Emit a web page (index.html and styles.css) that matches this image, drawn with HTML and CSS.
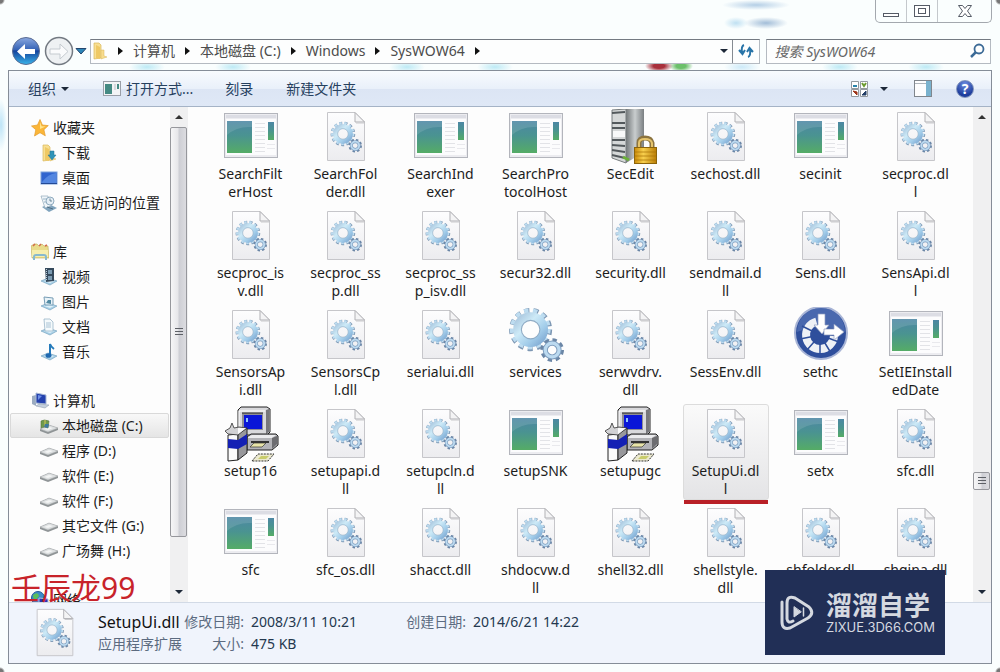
FILE: index.html
```html
<!DOCTYPE html>
<html lang="zh-CN">
<head>
  <meta charset="UTF-8">
  <meta name="viewport" content="width=device-width, initial-scale=1.0">
  <title>SysWOW64</title>
  <link rel="stylesheet" href="styles.css">
</head>
<body>
  <svg class="sprite" aria-hidden="true">
    <defs>
      <linearGradient id="g-paper" x1="0" y1="0" x2="0" y2="1"><stop offset="0" stop-color="#fdfdfe"/><stop offset="1" stop-color="#ececef"/></linearGradient>
      <linearGradient id="g-gear" x1="0" y1="0" x2="1" y2="1"><stop offset="0" stop-color="#a9c6de"/><stop offset=".35" stop-color="#cdeaf7"/><stop offset=".7" stop-color="#a3cdea"/><stop offset="1" stop-color="#7fa9d2"/></linearGradient>
      <linearGradient id="g-green" x1="0" y1="0" x2="0" y2="1"><stop offset="0" stop-color="#4d87a4"/><stop offset=".45" stop-color="#4a9391"/><stop offset="1" stop-color="#55ac66"/></linearGradient>
      <linearGradient id="g-server" x1="0" y1="0" x2="1" y2="0"><stop offset="0" stop-color="#73787a"/><stop offset=".5" stop-color="#c9cdce"/><stop offset="1" stop-color="#7a7f82"/></linearGradient>
      <linearGradient id="g-blue" x1="0" y1="0" x2="0" y2="1"><stop offset="0" stop-color="#8aa8e0"/><stop offset=".45" stop-color="#3563b6"/><stop offset=".5" stop-color="#15439c"/><stop offset="1" stop-color="#39b4ea"/></linearGradient>
      <linearGradient id="g-gold" x1="0" y1="0" x2="1" y2="0"><stop offset="0" stop-color="#c98a08"/><stop offset=".4" stop-color="#f8cf4d"/><stop offset="1" stop-color="#b97d06"/></linearGradient>
    </defs>

    <symbol id="gears" viewBox="0 0 26 26">
      <g fill="none">
        <circle cx="10.500" cy="10.500" r="8.700" stroke="#7d97b3" stroke-width="2.600" stroke-dasharray="2.300 1.905"/>
        <circle cx="10.300" cy="10.200" r="8.400" stroke="#bddcf0" stroke-width="2.200" stroke-dasharray="2 2.060"/>
        <circle cx="10.500" cy="10.500" r="6.200" stroke="url(#g-gear)" stroke-width="3.800"/>
        <circle cx="10.500" cy="10.500" r="4.300" stroke="#8fabc4" stroke-width=".500"/>
        <circle cx="20.500" cy="20" r="4.500" stroke="#6b86a6" stroke-width="2" stroke-dasharray="1.900 1.634"/>
        <circle cx="20.500" cy="20" r="3.200" stroke="#7d9cbd" stroke-width="2.400"/>
        <circle cx="20.500" cy="20" r="3.200" stroke="#bcdaf0" stroke-width="1.500"/>
      </g>
    </symbol>

    <symbol id="dll" viewBox="0 0 56 56">
      <path d="M9.500 3.500H37L46.500 13V51.500H9.500Z" fill="url(#g-paper)" stroke="#c6c6ca"/>
      <path d="M37 3.500V13H46.500Z" fill="#f4f4f5" stroke="#b1b1b5"/>
      <path d="M38 14H46" stroke="#c9c9cc"/>
      <use href="#gears" x="11" y="12" width="34" height="32"/>
    </symbol>

    <symbol id="exe" viewBox="0 0 56 56">
      <rect x="1.500" y="4.500" width="53" height="44" fill="#ececf0" stroke="#b3b5bc"/>
      <rect x="3" y="6" width="50" height="3" fill="#dcdde4"/>
      <rect x="3" y="10" width="50" height="36" fill="#fcfcfd"/>
      <rect x="4" y="12" width="25" height="32" fill="url(#g-green)"/>
      <path d="M4 26Q14 17 29 18V12H4Z" fill="#fff" opacity=".12"/>
      <path d="M32 14.500H42M32 18.500H42M32 22.500H42M32 26.500H42M32 30.500H42M32 34.500H42M32 38.500H42M32 42.500H42" stroke="#e2e3e7"/>
      <rect x="45" y="13" width="6" height="18" fill="url(#g-green)"/>
      <path d="M44 35.500H52M44 39.500H52" stroke="#e9e9ed"/>
    </symbol>

    <symbol id="services" viewBox="0 0 56 56"><use href="#gears" width="56" height="56"/></symbol>

    <symbol id="secedit" viewBox="0 0 56 56">
      <path d="M9 1L23 0V54L9 49Z" fill="#d5d8d8" stroke="#777c7e"/>
      <path d="M23 0H41V43L23 54Z" fill="url(#g-server)"/>
      <path d="M9 4L22 3M9 14H22M9 19H22M9 31H22M9 36L22 37M9 41L22 43M9 46L22 49" stroke="#53595c" stroke-width="2"/>
      <rect x="10" y="22" width="12" height="6" fill="#f8f9f9"/>
      <path d="M20 48l6 3" stroke="#6bb03a" stroke-width="3"/>
      <path d="M36 39V34Q36 29 42 29T49 34V39" fill="none" stroke="#8c7440" stroke-width="5"/>
      <path d="M36 39V34Q36 30 42 30T49 34V39" fill="none" stroke="#e5c46c" stroke-width="2"/>
      <rect x="31.500" y="38.500" width="22" height="16" fill="url(#g-gold)" stroke="#8c640a"/>
      <path d="M32 43H53M32 47H53M32 51H53" stroke="#a87207" opacity=".7"/>
    </symbol>

    <symbol id="sethc" viewBox="0 0 56 56">
      <circle cx="28" cy="26" r="26" fill="#2f4f9c" stroke="#a9b5d6" stroke-width="2"/>
      <path d="M4 25a24 24 0 0 1 48 0Q28 15 4 25Z" fill="#6b88c6" opacity=".45"/>
      <path d="M23.400 14.500A14 14 0 1 0 41 29" fill="none" stroke="#eef1f6" stroke-width="8"/>
      <path d="M27 28L38 46M27 28V47M27 28L14 43M27 28L7 32M27 28L9 19M27 28L46 35" stroke="#2f4f9c" stroke-width="1.500"/>
      <path d="M25 7H32V18H36L29 27L21 18H25Z" fill="#fff" stroke="#8c9bbf" stroke-width=".700"/>
      <path d="M31 22H41V17L51 25L41 33V28H31Z" fill="#fff" stroke="#8c9bbf" stroke-width=".700"/>
    </symbol>

    <symbol id="setup" viewBox="0 0 56 56">
      <path d="M15 4L18 1H44L47 3V26L44 29H17L15 27Z" fill="#d9d9dc" stroke="#222"/>
      <path d="M43 4L46 3V26L43 28Z" fill="#77777b"/>
      <path d="M16 27V5H42" fill="none" stroke="#fff"/>
      <path d="M19 7H40V24H19Z" fill="#8f8f93"/>
      <path d="M21 9H39V23H21Z" fill="#0a16d8"/>
      <path d="M19 7H40" stroke="#222"/>
      <path d="M23 12H25V16H23Z" fill="#8ec5ff"/>
      <path d="M24 31L28 28H53L55 30V39L49 44H24Z" fill="#b4b4b8" stroke="#222"/>
      <path d="M25 31L29 29H53L49 32H25Z" fill="#ececee"/>
      <path d="M49 32L54 30V38L49 43Z" fill="#6d6d71"/>
      <path d="M28 35H46V37H28Z" fill="#333"/>
      <path d="M27 41L31 37H43L39 41Z" fill="#e8e4a8" stroke="#333" stroke-width=".700"/>
      <path d="M5 29L15 28V54L5 55Z" fill="#fafafa" stroke="#222"/>
      <path d="M15 28L24 22V47L15 54Z" fill="#98989c" stroke="#222"/>
      <path d="M5 33L15 34L24 28V38L15 43L5 42Z" fill="#1420b4"/>
      <path d="M2 25L7 22L9 17L11 22L16 21L24 22L15 29L5 28Z" fill="#d2d2d4" stroke="#333" stroke-width=".800"/>
      <path d="M15 22L23 22L15 28Z" fill="#fafafa"/>
      <path d="M29 55L35 48H51L45 55Z" fill="#ecead0" stroke="#333" stroke-dasharray="2 1"/>
      <path d="M35 53L38 50H46L43 53Z" fill="#c8cc6c"/>
    </symbol>

    <symbol id="star" viewBox="0 0 18 18">
      <path d="M9 .500L11.400 6L17.300 6.600L12.900 10.700L14.300 16.800L9 13.700L3.500 17L4.800 10.700L.500 7L6.500 6Z" fill="#fbb638" stroke="#e39b2d" stroke-width=".700"/>
      <path d="M9 3L10.600 7.200L14.500 7.600L9 10Z" fill="#ffe48c"/>
    </symbol>
    <symbol id="folder" viewBox="0 0 18 18">
      <path d="M3 1H8L10 3V16L3 17Z" fill="#f8df92" stroke="#d9b75c" stroke-width=".700"/>
      <path d="M5 3L9 5V17L5 16Z" fill="#efc964"/>
      <path d="M10 8H13V14L16 15L10 17Z" fill="#f7dc8d" stroke="#d8b65c" stroke-width=".500"/>
    </symbol>
    <symbol id="download" viewBox="0 0 18 18">
      <use href="#folder"/>
      <path d="M10 7H14V11H16L12 16L8 11H10Z" fill="#2f94b8" stroke="#247390" stroke-width=".500"/>
    </symbol>
    <symbol id="desktop" viewBox="0 0 18 18">
      <rect x="1" y="3" width="16" height="12" fill="#3165cf" stroke="#7aa0d9"/>
      <path d="M2 13Q8 5 16 4V14H2Z" fill="#6496e8" opacity=".7"/>
      <path d="M1 14.500H17" stroke="#234a96"/>
    </symbol>
    <symbol id="recent" viewBox="0 0 18 18">
      <path d="M2 13L9 10L17 14L9 18Z" fill="#7fa3bd"/>
      <path d="M1 2H8L11 12L5 14Z" fill="#eff5f9" stroke="#94aaba" stroke-width=".700"/>
      <path d="M3 5H7M4 8H8" stroke="#9bb5c6"/>
      <circle cx="10" cy="7" r="4" fill="#e5eef5" stroke="#8fabbf"/>
      <path d="M10 4.500V7H12" stroke="#4f6e84" fill="none" stroke-width=".800"/>
      <path d="M7 13L13 15" stroke="#4f6e84"/>
    </symbol>
    <symbol id="library" viewBox="0 0 18 18">
      <path d="M0 3L3 1H6L8 3L11 1L13 3H17L18 15H1Z" fill="#e9dc8c" stroke="#c0af5d" stroke-width=".600"/>
      <path d="M2 3L4 1M8 3L10 1M14 3L16 2" stroke="#d46b4b" stroke-width="1.500"/>
      <path d="M1 7H17V14H1Z" fill="#f5eeae"/>
      <path d="M3 17V14Q3 12 5 12H13Q15 12 15 14V17" fill="none" stroke="#87b9ce" stroke-width="2"/>
    </symbol>
    <symbol id="tray" viewBox="0 0 18 18">
      <path d="M1 13L8 10L17 13L10 17Z" fill="#a9d0e6" stroke="#6d9cba" stroke-width=".600"/>
      <path d="M4 13L9 12L14 13L10 15Z" fill="#dff1fa"/>
    </symbol>
    <symbol id="video" viewBox="0 0 18 18">
      <use href="#tray"/>
      <path d="M5 0H14V13L6 14Z" fill="#35495c"/>
      <path d="M8 2H12V6H8ZM8 8H12V12H8Z" fill="#7c9bb2"/>
      <path d="M6.500 1V13" stroke="#bccdd8" stroke-dasharray="1 1"/>
    </symbol>
    <symbol id="picture" viewBox="0 0 18 18">
      <use href="#tray"/>
      <path d="M4 4L13 5V12L5 12Z" fill="#e9f3f8" stroke="#779db6"/>
      <path d="M6 10L8 7H11V11Z" fill="#528aa3"/>
    </symbol>
    <symbol id="document" viewBox="0 0 18 18">
      <use href="#tray"/>
      <path d="M4 1H10L13 4V13H5Z" fill="#f5fafc" stroke="#8eacc1" stroke-width=".700"/>
      <path d="M6 5H11M6 7H11M6 9H11" stroke="#a9c2d4"/>
    </symbol>
    <symbol id="music" viewBox="0 0 18 18">
      <use href="#tray"/>
      <path d="M10 12V1Q11 4 14 6" fill="none" stroke="#267bbb" stroke-width="2"/>
      <ellipse cx="8.500" cy="12.500" rx="3" ry="2.300" fill="#2069b0"/>
    </symbol>
    <symbol id="computer" viewBox="0 0 18 18">
      <path d="M1 4L5 3V14L1 12Z" fill="#9babc0"/>
      <path d="M5 1L15 3V12L5 11Z" fill="#2441ad" stroke="#a9bad6"/>
      <path d="M7 3L11 4L7 8Z" fill="#6d8fe8"/>
      <path d="M8 12L18 13L14 16L5 14Z" fill="#c5d0dd" stroke="#8795a6" stroke-width=".500"/>
    </symbol>
    <symbol id="drive" viewBox="0 0 18 18">
      <path d="M0 10L9 6L18 9V11L8 15L0 12Z" fill="#8f9496"/>
      <path d="M0 10L9 6L18 9L8 13Z" fill="#dcdfe0" stroke="#a3a7a9" stroke-width=".500"/>
      <path d="M4 10L9 8L13 9L8 11Z" fill="#f4f5f5"/>
    </symbol>
    <symbol id="system-drive" viewBox="0 0 18 18">
      <use href="#drive" y="2"/>
      <path d="M1 4Q4 2 9 4L8 11Q4 9 1 11Z" fill="#6f9a4c" stroke="#55733e" stroke-width=".600"/>
      <path d="M5 3V10" stroke="#d9c95c"/>
      <path d="M5 7L9 7L8 11L4 10Z" fill="#3f79a0"/>
    </symbol>
    <symbol id="network" viewBox="0 0 18 18">
      <circle cx="7" cy="7" r="6.500" fill="#3c8cc9" stroke="#245c96"/>
      <path d="M2 4Q7 0 8 5L5 9Q2 9 2 4Z" fill="#5dbf5a"/>
      <path d="M8 7L17 8V16L8 14Z" fill="#2734b0" stroke="#b4bde0"/>
    </symbol>
  </svg>

  <header class="titlebar">
    <div class="window-buttons">
      <button aria-label="最小化"><svg width="18" height="16" viewBox="0 0 18 16"><rect x="1.500" y="10.500" width="15" height="3" fill="#fff" stroke="#555b66"/></svg></button>
      <button aria-label="还原"><svg width="18" height="16" viewBox="0 0 18 16"><rect x="1.500" y="2.500" width="15" height="11" fill="#fff" stroke="#555b66"/><rect x="5.500" y="5.500" width="7" height="5" fill="#fff" stroke="#555b66"/></svg></button>
      <button class="close" aria-label="关闭"><svg width="16" height="16" viewBox="0 0 16 16"><path d="M1.500 2.500H5.500L8 5.500L10.500 2.500H14.500L10.500 8L14.500 13.500H10.500L8 10.500L5.500 13.500H1.500L5.500 8Z" fill="#fff" stroke="#555b66"/></svg></button>
    </div>
  </header>

  <nav class="navbar">
    <div class="history">
      <button aria-label="后退"><svg width="30" height="30" viewBox="0 0 30 30"><circle cx="15" cy="15" r="13.500" fill="url(#g-blue)" stroke="#5a6c93"/><path d="M6 15.500L14 8V13H24V18H14V23Z" fill="#fff"/></svg></button>
      <button aria-label="前进"><svg width="30" height="30" viewBox="0 0 30 30"><circle cx="15" cy="15" r="13.500" fill="#eef1f3" stroke="#737a82" stroke-width="1.500"/><path d="M24 15.500L16 8V13H6V18H16V23Z" fill="#fafbfc" stroke="#c5cbd0"/></svg></button>
      <button class="recent-pages" aria-label="最近的页面"><svg width="12" height="8" viewBox="0 0 12 8"><path d="M1 1.500H11L6 7Z" fill="#2c86b8" stroke="#23466e"/></svg></button>
    </div>
    <div class="address">
      <svg class="icon" width="18" height="18"><use href="#folder"/></svg>
      <i class="crumb-arrow"></i><a href="#">计算机</a>
      <i class="crumb-arrow"></i><a href="#">本地磁盘 (C:)</a>
      <i class="crumb-arrow"></i><a href="#">Windows</a>
      <i class="crumb-arrow"></i><a href="#">SysWOW64</a>
      <i class="crumb-arrow"></i>
      <button class="history-drop" aria-label="历史记录"><i class="down-arrow"></i></button>
      <button class="refresh" aria-label="刷新"><svg width="16" height="16" viewBox="0 0 16 16"><path d="M6 2Q3 3 4 10M1 7L4.500 11L7 7M10 14Q13 13 12 6M9 9L11.500 5L15 9" fill="none" stroke="#2874a8" stroke-width="2"/></svg></button>
    </div>
    <div class="search">
      <input type="search" aria-label="搜索" placeholder="搜索 SysWOW64">
      <svg width="16" height="16" viewBox="0 0 16 16"><circle cx="10" cy="6" r="4.500" fill="none" stroke="#3c6a96" stroke-width="1.800"/><path d="M7 9L2 14" stroke="#3c6a96" stroke-width="2.500"/></svg>
    </div>
  </nav>

  <div class="frame">
    <div class="toolbar">
      <button class="organize">组织 <i class="down-arrow"></i></button>
      <button class="open-with"><svg width="18" height="16" viewBox="0 0 18 16"><rect x=".500" y=".500" width="17" height="14" fill="#f3f4f6" stroke="#9a9fa8"/><rect x="2" y="3" width="7" height="10" fill="#458a83"/><path d="M11 4H13M11 6H13M11 8H13" stroke="#b9bdc5"/><rect x="14" y="3" width="2" height="5" fill="#458a83"/></svg>打开方式...</button>
      <button>刻录</button>
      <button class="new-folder">新建文件夹</button>
      <span class="spacer"></span>
      <button aria-label="更改视图"><svg width="17" height="16" viewBox="0 0 17 16"><path d="M.500 .500H7.500V7.500H.500ZM9.500 .500H16.500V7.500H9.500ZM.500 8.500H7.500V15.500H.500ZM9.500 8.500H16.500V15.500H9.500Z" fill="#fff" stroke="#93999e"/><path d="M2 5H6" stroke="#2a84ab" stroke-width="2"/><path d="M11 2L13 5L15 2" stroke="#6b9b2e" stroke-width="2" fill="none"/><path d="M2 10L6 14V11Z" fill="#9d3318" stroke="#9d3318"/><path d="M11 14L15 10V14Z" fill="#223e66" stroke="#223e66"/></svg></button>
      <button class="view-drop" aria-label="更多视图"><i class="down-arrow"></i></button>
      <button class="preview" aria-label="预览窗格"><svg width="18" height="17" viewBox="0 0 18 17"><rect x=".500" y=".500" width="17" height="16" fill="#fdfdfe" stroke="#80868d"/><path d="M1 3.500H17" stroke="#aeb5bc"/><rect x="12" y="1" width="5" height="15" fill="#7ab2ce"/></svg></button>
      <button class="help" aria-label="帮助">?</button>
    </div>

    <main class="content">
      <aside class="sidebar">
        <ul class="tree">
          <li><a class="root" href="#"><svg class="icon"><use href="#star"/></svg>收藏夹</a></li>
          <li><a href="#"><svg class="icon"><use href="#download"/></svg>下载</a></li>
          <li><a href="#"><svg class="icon"><use href="#desktop"/></svg>桌面</a></li>
          <li><a href="#"><svg class="icon"><use href="#recent"/></svg>最近访问的位置</a></li>
        </ul>
        <ul class="tree">
          <li><a class="root" href="#"><svg class="icon"><use href="#library"/></svg>库</a></li>
          <li><a href="#"><svg class="icon"><use href="#video"/></svg>视频</a></li>
          <li><a href="#"><svg class="icon"><use href="#picture"/></svg>图片</a></li>
          <li><a href="#"><svg class="icon"><use href="#document"/></svg>文档</a></li>
          <li><a href="#"><svg class="icon"><use href="#music"/></svg>音乐</a></li>
        </ul>
        <ul class="tree">
          <li><a class="root" href="#"><svg class="icon"><use href="#computer"/></svg>计算机</a></li>
          <li><a class="current" href="#"><svg class="icon"><use href="#system-drive"/></svg>本地磁盘 (C:)</a></li>
          <li><a href="#"><svg class="icon"><use href="#drive"/></svg>程序 (D:)</a></li>
          <li><a href="#"><svg class="icon"><use href="#drive"/></svg>软件 (E:)</a></li>
          <li><a href="#"><svg class="icon"><use href="#drive"/></svg>软件 (F:)</a></li>
          <li><a href="#"><svg class="icon"><use href="#drive"/></svg>其它文件 (G:)</a></li>
          <li><a href="#"><svg class="icon"><use href="#drive"/></svg>广场舞 (H:)</a></li>
        </ul>
        <ul class="tree">
          <li><a class="root" href="#"><svg class="icon"><use href="#network"/></svg>网络</a></li>
        </ul>
      </aside>
      <div class="scrollbar side-scroll">
        <button aria-label="向上滚动"><i class="up-arrow"></i></button>
        <div class="thumb"><i class="grip"></i></div>
        <div class="track"></div>
        <button aria-label="向下滚动"><i class="down-arrow"></i></button>
      </div>

      <section class="files">
        <button class="file"><svg><use href="#exe"/></svg><span>SearchFilt<br>erHost</span></button>
        <button class="file"><svg><use href="#dll"/></svg><span>SearchFol<br>der.dll</span></button>
        <button class="file"><svg><use href="#exe"/></svg><span>SearchInd<br>exer</span></button>
        <button class="file"><svg><use href="#exe"/></svg><span>SearchPro<br>tocolHost</span></button>
        <button class="file"><svg><use href="#secedit"/></svg><span>SecEdit</span></button>
        <button class="file"><svg><use href="#dll"/></svg><span>sechost.dll</span></button>
        <button class="file"><svg><use href="#exe"/></svg><span>secinit</span></button>
        <button class="file"><svg><use href="#dll"/></svg><span>secproc.dl<br>l</span></button>

        <button class="file"><svg><use href="#dll"/></svg><span>secproc_is<br>v.dll</span></button>
        <button class="file"><svg><use href="#dll"/></svg><span>secproc_ss<br>p.dll</span></button>
        <button class="file"><svg><use href="#dll"/></svg><span>secproc_ss<br>p_isv.dll</span></button>
        <button class="file"><svg><use href="#dll"/></svg><span>secur32.dll</span></button>
        <button class="file"><svg><use href="#dll"/></svg><span>security.dll</span></button>
        <button class="file"><svg><use href="#dll"/></svg><span>sendmail.d<br>ll</span></button>
        <button class="file"><svg><use href="#dll"/></svg><span>Sens.dll</span></button>
        <button class="file"><svg><use href="#dll"/></svg><span>SensApi.dl<br>l</span></button>

        <button class="file"><svg><use href="#dll"/></svg><span>SensorsAp<br>i.dll</span></button>
        <button class="file"><svg><use href="#dll"/></svg><span>SensorsCp<br>l.dll</span></button>
        <button class="file"><svg><use href="#dll"/></svg><span>serialui.dll</span></button>
        <button class="file"><svg><use href="#services"/></svg><span>services</span></button>
        <button class="file"><svg><use href="#dll"/></svg><span>serwvdrv.<br>dll</span></button>
        <button class="file"><svg><use href="#dll"/></svg><span>SessEnv.dll</span></button>
        <button class="file"><svg><use href="#sethc"/></svg><span>sethc</span></button>
        <button class="file"><svg><use href="#exe"/></svg><span>SetIEInstall<br>edDate</span></button>

        <button class="file"><svg><use href="#setup"/></svg><span>setup16</span></button>
        <button class="file"><svg><use href="#dll"/></svg><span>setupapi.d<br>ll</span></button>
        <button class="file"><svg><use href="#dll"/></svg><span>setupcln.d<br>ll</span></button>
        <button class="file"><svg><use href="#exe"/></svg><span>setupSNK</span></button>
        <button class="file"><svg><use href="#setup"/></svg><span>setupugc</span></button>
        <button class="file selected"><svg><use href="#dll"/></svg><span>SetupUi.dl<br>l</span></button>
        <button class="file"><svg><use href="#exe"/></svg><span>setx</span></button>
        <button class="file"><svg><use href="#dll"/></svg><span>sfc.dll</span></button>

        <button class="file"><svg><use href="#exe"/></svg><span>sfc</span></button>
        <button class="file"><svg><use href="#dll"/></svg><span>sfc_os.dll</span></button>
        <button class="file"><svg><use href="#dll"/></svg><span>shacct.dll</span></button>
        <button class="file"><svg><use href="#dll"/></svg><span>shdocvw.d<br>ll</span></button>
        <button class="file"><svg><use href="#dll"/></svg><span>shell32.dll</span></button>
        <button class="file"><svg><use href="#dll"/></svg><span>shellstyle.<br>dll</span></button>
        <button class="file"><svg><use href="#dll"/></svg><span>shfolder.dl<br>l</span></button>
        <button class="file"><svg><use href="#dll"/></svg><span>shgina.dll</span></button>
      </section>
      <div class="scrollbar main-scroll">
        <button aria-label="向上滚动"><i class="up-arrow"></i></button>
        <div class="track before"></div>
        <div class="thumb"><i class="grip"></i></div>
        <div class="track after"></div>
        <button aria-label="向下滚动"><i class="down-arrow"></i></button>
      </div>
    </main>

    <footer class="details">
      <svg class="preview-icon"><use href="#dll"/></svg>
      <div class="info">
        <strong>SetupUi.dll</strong>
        <span class="label">修改日期:</span><span>2008/3/11 10:21</span>
        <span class="label">创建日期:</span><span>2014/6/21 14:22</span>
        <span class="kind">应用程序扩展</span>
        <span class="label">大小:</span><span>475 KB</span>
      </div>
    </footer>
  </div>

  <div class="author-mark">壬辰龙99</div>
  <div class="site-mark">
    <svg width="36" height="38" viewBox="0 0 36 38" fill="none" stroke="#d5d9e0" stroke-width="3" stroke-linecap="round" stroke-linejoin="round">
      <path d="M3 8V28Q3 36 11 34L29 24Q36 19 30 13L16 4Q8 1 8 9V25Q9 30 14 27"/>
      <path d="M15 13V23L22 18Z" fill="#d5d9e0" stroke-width="1"/>
      <path d="M24.500 14V22" stroke-width="1.500"/>
    </svg>
    <div>
      <div class="site-name">溜溜自学</div>
      <div class="site-url">ZIXUE.3D66.COM</div>
    </div>
  </div>
</body>
</html>
```
FILE: styles.css
```css
* {
  box-sizing: border-box;
}
body {
  margin: 0;
  height: 100vh;
  display: flex;
  flex-direction: column;
  overflow: hidden;
  font-family: "Noto Sans", "Noto Sans CJK SC", sans-serif;
  font-size: 14px;
  line-height: 18px;
  color: #1c1c1c;
  /* desktop showing through the glass border */
  background:
    radial-gradient(circle at 0 0, #777 3px, transparent 5px),
    radial-gradient(circle at 100% 0, #777 3px, transparent 5px),
    radial-gradient(circle at 0 100%, #777 3px, transparent 5px),
    radial-gradient(circle at 100% 100%, #777 3px, transparent 5px),
    radial-gradient(ellipse 34px 5px at 756px 5px, #b5cfe6, transparent),
    radial-gradient(ellipse 12px 6px at 736px 23px, #bfe0f2, transparent),
    radial-gradient(ellipse 22px 6px at 766px 23px, #a2bdd8, transparent),
    radial-gradient(ellipse 14px 6px at 659px 66px, #a8303c 40%, transparent),
    radial-gradient(ellipse 12px 6px at 681px 66px, #6cc06a 40%, transparent),
    radial-gradient(ellipse 18px 6px at 147px 67px, #bdeaf5, transparent),
    radial-gradient(ellipse 18px 6px at 233px 67px, #bdeaf5, transparent),
    radial-gradient(ellipse 18px 6px at 407px 67px, #bdeaf5, transparent),
    radial-gradient(ellipse 18px 6px at 495px 67px, #bdeaf5, transparent),
    radial-gradient(ellipse 18px 6px at 742px 67px, #cdeaf8, transparent),
    radial-gradient(ellipse 18px 6px at 840px 67px, #bdeaf5, transparent),
    radial-gradient(ellipse 18px 6px at 926px 67px, #bdeaf5, transparent),
    radial-gradient(ellipse 6px 26px at 1px 125px, #bde4f7, transparent),
    #fafefe;
}
button {
  padding: 0;
  border: 0;
  background: none;
  font: inherit;
  color: inherit;
}
svg {
  display: block;
  flex: none;
}
.sprite {
  position: absolute;
  width: 0;
  height: 0;
}
.icon {
  width: 18px;
  height: 18px;
}
.down-arrow,
.up-arrow {
  display: inline-block;
  border: 4px solid transparent;
  border-top-color: #1d2838;
  border-bottom-width: 0;
}
.up-arrow {
  border-top-width: 0;
  border-bottom: 4px solid #333;
}

.titlebar {
  display: flex;
  justify-content: flex-end;
  padding-right: 8px;
}
.window-buttons {
  display: flex;
  height: 23px;
  border: 1px solid #a3a8ae;
  border-top: 0;
  border-radius: 0 0 5px 5px;
}
.window-buttons button {
  display: flex;
  align-items: center;
  justify-content: center;
  width: 31px;
  border-right: 1px solid #c4c8cc;
}
.window-buttons .close {
  width: 53px;
  border-right: 0;
}

.navbar {
  display: flex;
  align-items: center;
  gap: 6px;
  padding: 13px 9px 4px 11px;
}
.history {
  display: flex;
  align-items: center;
  gap: 3px;
  width: 73px;
}
.recent-pages {
  margin-left: -2px;
}
.address,
.search {
  display: flex;
  align-items: center;
  height: 25px;
  border: 1px solid #b4bac1;
  border-top-color: #737a82;
  background: #fdfefe;
}
.address {
  flex: 1;
}
.address a {
  margin: 0 10px;
  color: #4c4c4c;
  text-decoration: none;
}
.address .icon {
  margin-right: 9px;
}
.crumb-arrow {
  border: 4px solid transparent;
  border-left: 5px solid #111;
  border-right-width: 0;
}
.history-drop {
  margin-left: auto;
  padding-right: 4px;
  display: flex;
}
.refresh {
  display: flex;
  align-items: center;
  justify-content: center;
  width: 27px;
  height: 100%;
  border-left: 1px solid #858b92;
}
.search {
  width: 23%;
  padding: 0 5px 0 8px;
}
.search input {
  flex: 1;
  min-width: 0;
  padding: 0;
  border: 0;
  outline: 0;
  background: none;
  font: italic 14px "Noto Sans", "Noto Sans CJK SC", sans-serif;
}
.search input::placeholder {
  color: #666;
}

.frame {
  flex: 1;
  min-height: 0;
  display: flex;
  flex-direction: column;
  margin: 0 8px 8px;
  border: 1px solid #858d98;
  background: #fdfdfd;
}
.toolbar {
  display: flex;
  align-items: center;
  height: 36px;
  padding: 0 17px 0 19px;
  border-bottom: 1px solid #a5b3c6;
  background: linear-gradient(#f8fbfe, #e9f0fa 50%, #dce5f4 52%, #dfe8f6);
  color: #26405e;
}
.toolbar button {
  display: flex;
  align-items: center;
  gap: 5px;
}
.organize {
  margin-right: 34px;
}
.open-with {
  margin-right: 32px;
}
.new-folder {
  margin-left: 33px;
}
.spacer {
  flex: 1;
}
.view-drop {
  margin: 0 26px 0 12px;
}
.toolbar .help {
  justify-content: center;
  width: 18px;
  height: 18px;
  margin-left: 24px;
  border: 1px solid #8093bb;
  border-radius: 50%;
  background: radial-gradient(circle at 50% 20%, #6c8ce0, #1f3e9d 70%);
  color: #fff;
  font-weight: bold;
}

.content {
  flex: 1;
  min-height: 0;
  display: flex;
}
.sidebar {
  width: 161px;
  padding-top: 8px;
  overflow: hidden;
}
.tree {
  list-style: none;
  margin: 0 0 24px;
  padding: 0;
}
.tree a {
  display: flex;
  align-items: center;
  gap: 4px;
  height: 25px;
  margin: 0 1px;
  padding-left: 29px;
  border: 1px solid transparent;
  color: inherit;
  text-decoration: none;
  white-space: nowrap;
}
.tree .root {
  padding-left: 20px;
}
.tree .current {
  border-color: #d9d9d9;
  border-radius: 2px;
  background: linear-gradient(#f8f8f8, #e5e5e5);
}

.scrollbar {
  display: flex;
  flex-direction: column;
  width: 18px;
  background: #f0f0f1;
}
.scrollbar button {
  display: flex;
  align-items: center;
  justify-content: center;
  height: 20px;
}
.thumb {
  display: flex;
  align-items: center;
  justify-content: center;
  margin-right: 1px;
  border: 1px solid #96979c;
  border-radius: 2px;
  background: linear-gradient(90deg, #f6f6f7, #e6e6e9 48%, #cdced4 52%, #dcdce0);
}
.grip {
  width: 8px;
  height: 8px;
  background: repeating-linear-gradient(#5d6066 0 1px, transparent 1px 3px);
}
.side-scroll .thumb {
  flex: 9;
}
.side-scroll .track {
  flex: 1;
}
.main-scroll .thumb {
  height: 18px;
}
.main-scroll .before {
  flex: 15;
}
.main-scroll .after {
  flex: 4;
}

.files {
  flex: 1;
  display: grid;
  grid-template-columns: repeat(8, 1fr);
  align-content: start;
  justify-items: center;
  row-gap: 3px;
  padding: 0 10px 0 15px;
  overflow: hidden;
}
.file {
  display: flex;
  flex-direction: column;
  align-items: center;
  width: 86px;
  height: 96px;
  padding-top: 1px;
  border: 1px solid transparent;
  text-align: center;
  white-space: nowrap;
}
.file svg {
  width: 56px;
  height: 56px;
}
.selected {
  position: relative;
  border-color: #dcdcdc;
  border-radius: 3px;
  background: linear-gradient(#fafafa, #e4e4e6);
}
.selected::after {
  content: "";
  position: absolute;
  left: 0;
  right: 0;
  top: 95px;
  height: 4px;
  background: #b92027;
}

.details {
  display: flex;
  align-items: center;
  height: 61px;
  padding-left: 19px;
  border-top: 1px solid #d2dae6;
  background: #f0f4fc;
}
.preview-icon {
  width: 54px;
  height: 54px;
}
.info {
  display: grid;
  grid-template-columns: 86px 60px 162px 60px auto;
  row-gap: 4px;
  align-items: center;
  margin-left: 16px;
  color: #24384f;
  white-space: nowrap;
}
.info strong {
  font-size: 16px;
  font-weight: normal;
  color: #111;
}
.info .label,
.info .kind {
  color: #5c6b80;
}
.info .label {
  text-align: right;
}
.info .label + span {
  padding-left: 7px;
}

.author-mark {
  position: absolute;
  left: 11px;
  bottom: 66px;
  font-size: 30px;
  line-height: 36px;
  color: #c8232a;
}
.site-mark {
  position: absolute;
  right: 55px;
  bottom: 17px;
  display: flex;
  align-items: center;
  gap: 11px;
  width: 180px;
  height: 85px;
  padding-left: 14px;
  background: #212f56;
  color: #d5d9e0;
}
.site-name {
  font-size: 26px;
  line-height: 28px;
  font-weight: bold;
}
.site-url {
  font: 13px/16px Inter, sans-serif;
}
```
